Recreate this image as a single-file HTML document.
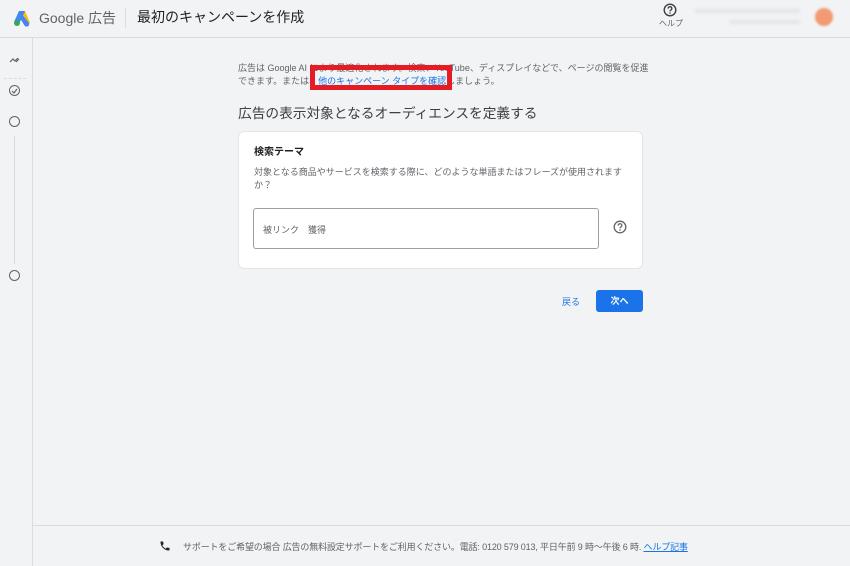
<!DOCTYPE html>
<html><head><meta charset="utf-8"><style>
*{box-sizing:border-box;margin:0;padding:0}
body{width:850px;height:566px;background:#f1f3f4;font-family:"Liberation Sans","Noto Sans CJK JP",sans-serif;color:#3c4043;position:relative;overflow:hidden}
.hdr{position:absolute;left:0;top:0;width:850px;height:38px;border-bottom:1px solid #dadce0}
.side{position:absolute;left:0;top:38px;width:33px;height:528px;border-right:1px solid #dadce0}
.foot{position:absolute;left:33px;top:525px;width:817px;height:41px;border-top:1px solid #dadce0}
.abs{position:absolute;white-space:nowrap}
a{color:#1a73e8;text-decoration:underline}
.card{position:absolute;left:238px;top:131px;width:405px;height:138px;background:#fff;border-radius:6px;border:1px solid #e3e5e8}
.circ{position:absolute;width:11px;height:11px;border:1.4px solid #5f6368;border-radius:50%}
</style></head><body>
<div class="hdr">
<svg class="abs" style="left:12px;top:9px" width="20" height="18" viewBox="0 0 20 18"><path d="M7 2 L13 2 L18 14 L13 16 Z" fill="#fbbc04"/><path d="M9 4 L17 14 A2.6 2.6 0 0 1 12.5 16.5 L6 6 Z" fill="#4285f4"/><path d="M13 2 L7 2 L2 13 L7 15 Z" fill="#4285f4"/><circle cx="5" cy="14" r="3" fill="#34a853"/></svg>
<div class="abs" style="left:39px;top:8px;font-size:14px;color:#5f6368">Google 広告</div>
<div class="abs" style="left:125px;top:8px;width:1px;height:20px;background:#dadce0"></div>
<div class="abs" style="left:137px;top:7px;font-size:14px;color:#202124">最初のキャンペーンを作成</div>
<svg class="abs" style="left:663px;top:3px" width="14" height="14" viewBox="0 0 14 14"><circle cx="7" cy="7" r="5.8" fill="none" stroke="#3c4043" stroke-width="1.4"/><path d="M5.2 5.6a1.8 1.8 0 1 1 2.4 1.6c-.5.3-.6.6-.6 1.2" fill="none" stroke="#3c4043" stroke-width="1.3"/><circle cx="7" cy="10" r=".8" fill="#3c4043"/></svg>
<div class="abs" style="left:659px;top:18px;font-size:8px;color:#5f6368">ヘルプ</div>
<div class="abs" style="left:695px;top:9px;width:105px;height:4px;background:#e3e4e6;filter:blur(1.5px)"></div>
<div class="abs" style="left:730px;top:20px;width:70px;height:4px;background:#e3e4e6;filter:blur(1.5px)"></div>
<div class="abs" style="left:815px;top:8px;width:18px;height:18px;border-radius:50%;background:#f29a73;filter:blur(1px)"></div>
</div>
<div class="side">
<svg class="abs" style="left:9px;top:18px" width="12" height="8" viewBox="0 0 12 8"><path d="M1 6 L4 3 L6 5 L9 2 M7 6 L10 3" fill="none" stroke="#5f6368" stroke-width="1.2"/></svg>
<div class="abs" style="left:4px;top:40px;width:22px;border-top:1px dashed #dadce0"></div>
<div class="circ" style="left:9px;top:47px"></div>
<svg class="abs" style="left:11px;top:50px" width="7" height="6" viewBox="0 0 7 6"><path d="M1 3 L3 5 L6 1" fill="none" stroke="#5f6368" stroke-width="1.2"/></svg>
<div class="circ" style="left:9px;top:78px"></div>
<div class="abs" style="left:14px;top:98px;width:1px;height:128px;background:#dadce0"></div>
<div class="circ" style="left:9px;top:232px"></div>
</div>
<div class="abs" style="left:238px;top:62px;font-size:9px;line-height:13px;color:#5f6368">広告は Google AI により最適化されます。検索、YouTube、ディスプレイなどで、ページの閲覧を促進<br>できます。または、<a>他のキャンペーン タイプを確認</a>しましょう。</div>
<div class="abs" style="left:310px;top:65px;width:142px;height:25px;border:5px solid #e51c23"></div>
<div class="abs" style="left:238px;top:102px;font-size:13.7px;color:#3c4043">広告の表示対象となるオーディエンスを定義する</div>
<div class="card">
<div class="abs" style="left:15px;top:11px;font-size:10px;color:#202124;font-weight:bold">検索テーマ</div>
<div class="abs" style="left:15px;top:34px;font-size:9px;line-height:13px;color:#5f6368">対象となる商品やサービスを検索する際に、どのような単語またはフレーズが使用されます<br>か？</div>
<div class="abs" style="left:14px;top:76px;width:346px;height:41px;border:1px solid #9aa0a6;border-radius:3px"></div>
<div class="abs" style="left:24px;top:91px;font-size:9px;color:#5f6368">被リンク　獲得</div>
<svg class="abs" style="left:374px;top:88px" width="14" height="14" viewBox="0 0 14 14"><circle cx="7" cy="7" r="5.8" fill="none" stroke="#5f6368" stroke-width="1.3"/><path d="M5.2 5.6a1.8 1.8 0 1 1 2.4 1.6c-.5.3-.6.6-.6 1.2" fill="none" stroke="#5f6368" stroke-width="1.2"/><circle cx="7" cy="10" r=".8" fill="#5f6368"/></svg>
</div>
<div class="abs" style="left:562px;top:295px;font-size:9px;color:#1a73e8">戻る</div>
<div class="abs" style="left:596px;top:290px;width:47px;height:22px;background:#1a73e8;border-radius:3px;color:#fff;font-size:9px;text-align:center;line-height:22px;font-weight:bold">次へ</div>
<div class="foot">
<svg class="abs" style="left:126px;top:14px" width="12" height="12" viewBox="0 0 24 24"><path d="M6.6 10.8c1.4 2.8 3.8 5.1 6.6 6.6l2.2-2.2c.3-.3.7-.4 1-.2 1.1.4 2.3.6 3.6.6.6 0 1 .4 1 1V20c0 .6-.4 1-1 1C10.6 21 3 13.4 3 4c0-.6.4-1 1-1h3.5c.6 0 1 .4 1 1 0 1.3.2 2.5.6 3.6.1.3 0 .7-.2 1z" fill="#202124"/></svg>
<div class="abs" style="left:150px;top:14px;font-size:9px;color:#5f6368;letter-spacing:-0.15px">サポートをご希望の場合 広告の無料設定サポートをご利用ください。電話: 0120 579 013, 平日午前 9 時〜午後 6 時. <a>ヘルプ記事</a></div>
</div>
</body></html>
